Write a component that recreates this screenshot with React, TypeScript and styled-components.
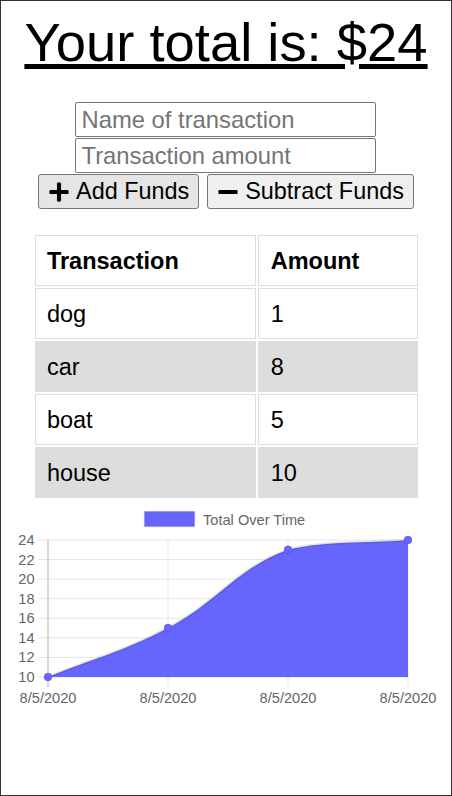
import styled, { createGlobalStyle } from "styled-components";
import { FaPlus, FaMinus } from "react-icons/fa";

const GlobalStyle = createGlobalStyle`
  html, body {
    margin: 0;
    padding: 0;
    background: #fff;
  }
  body {
    font-family: "Liberation Sans", Arial, sans-serif;
    color: #000;
  }
`;

const Page = styled.div`
  min-height: 100vh;
  box-sizing: border-box;
  border: 1px solid #333;
  display: flex;
  flex-direction: column;
  align-items: center;
`;

const Title = styled.h1`
  margin: 10px 0 0;
  font-size: 54.4px;
  font-weight: 400;
  line-height: normal;
  text-decoration: underline;
`;

const Form = styled.div`
  margin-top: 28px;
  display: flex;
  flex-direction: column;
  align-items: center;
  gap: 1px;
`;

const Input = styled.input`
  box-sizing: border-box;
  width: 301px;
  height: 35px;
  padding: 0 5px;
  font-family: inherit;
  font-size: 23.8px;
  border: 1px solid #767676;
  border-radius: 2px;
  outline: none;

  &::placeholder {
    color: #757575;
  }
`;

const ButtonRow = styled.div`
  display: flex;
  gap: 8px;
`;

const Button = styled.button<{ $shade?: boolean }>`
  box-sizing: border-box;
  height: 35px;
  display: inline-flex;
  align-items: center;
  gap: 6px;
  padding: 0 9px;
  font-family: inherit;
  font-size: 23.4px;
  color: #000;
  background: ${(p) => (p.$shade ? "#e5e5e5" : "#efefef")};
  border: 1px solid #767676;
  border-radius: 3px;
`;

const Table = styled.table`
  margin-top: 24px;
  width: 387px;
  table-layout: fixed;
  border-collapse: separate;
  border-spacing: 2px;
  font-size: 23.5px;
`;

const Th = styled.th<{ $w?: string }>`
  width: ${(p) => p.$w ?? "auto"};
  border: 1px solid #ddd;
  padding: 11.5px 11.4px;
  line-height: 26px;
  text-align: left;
  font-weight: 700;
`;

const Td = styled.td<{ $shade?: boolean }>`
  border: 1px solid #ddd;
  padding: 11.5px 11.4px;
  line-height: 26px;
  background: ${(p) => (p.$shade ? "#ddd" : "#fff")};
`;

const ChartBox = styled.svg`
  display: block;
  width: 450px;
  height: 215px;
  font-family: "Liberation Sans", Arial, sans-serif;
  font-size: 14.6px;
`;

const transactions = [
  { name: "dog", value: 1 },
  { name: "car", value: 8 },
  { name: "boat", value: 5 },
  { name: "house", value: 10 },
];

const totals = [10, 15, 23, 24];

// chart area, in svg pixels
const X0 = 47;
const X1 = 407;
const YT = 40;
const YB = 177;
const MIN = 10;
const MAX = 24;
const TENSION = 0.4;

const clamp = (v: number, lo: number, hi: number) => Math.min(hi, Math.max(lo, v));

const Chart = () => {
  const pts = totals.map((v, i) => ({
    x: X0 + (i * (X1 - X0)) / (totals.length - 1),
    y: YB - ((v - MIN) * (YB - YT)) / (MAX - MIN),
  }));

  // same spline as chart.js line tension
  const cps = pts.map((p, i) => {
    const prev = pts[i - 1] ?? p;
    const next = pts[i + 1] ?? p;
    const d01 = Math.hypot(p.x - prev.x, p.y - prev.y);
    const d12 = Math.hypot(next.x - p.x, next.y - p.y);
    const sum = d01 + d12 || 1;
    const fa = TENSION * (d01 / sum);
    const fb = TENSION * (d12 / sum);
    return {
      px: clamp(p.x - fa * (next.x - prev.x), X0, X1),
      py: clamp(p.y - fa * (next.y - prev.y), YT, YB),
      nx: clamp(p.x + fb * (next.x - prev.x), X0, X1),
      ny: clamp(p.y + fb * (next.y - prev.y), YT, YB),
    };
  });

  let line = `M${pts[0].x},${pts[0].y}`;
  for (let i = 1; i < pts.length; i++) {
    line += ` C${cps[i - 1].nx},${cps[i - 1].ny} ${cps[i].px},${cps[i].py} ${pts[i].x},${pts[i].y}`;
  }
  const area = `${line} L${X1},${YB} L${X0},${YB} Z`;

  const ticks: number[] = [];
  for (let v = MAX; v >= MIN; v -= 2) ticks.push(v);
  const yOf = (v: number) => YB - ((v - MIN) * (YB - YT)) / (MAX - MIN);

  return (
    <ChartBox viewBox="0 0 450 215">
      <rect x={143.5} y={11.5} width={50} height={15} fill="#6666ff" stroke="rgba(0,0,0,0.12)" strokeWidth={1.5} />
      <text x={202} y={24.5} fill="#666">Total Over Time</text>

      {ticks.map((v) => (
        <g key={v}>
          <line x1={37} x2={X1} y1={yOf(v)} y2={yOf(v)} stroke="rgba(0,0,0,0.1)" strokeWidth={1} />
          <text x={33.5} y={yOf(v) + 5} fill="#666" textAnchor="end">{v}</text>
        </g>
      ))}
      {pts.map((p, i) => (
        <g key={i}>
          <line x1={p.x} x2={p.x} y1={YT} y2={YB + 10} stroke="rgba(0,0,0,0.1)" strokeWidth={1} />
          <text x={p.x} y={203} fill="#666" textAnchor="middle">8/5/2020</text>
        </g>
      ))}
      <line x1={X0} x2={X0} y1={YT} y2={YB + 10} stroke="rgba(0,0,0,0.15)" strokeWidth={1.5} />

      <path d={area} fill="#6666ff" />
      <path d={line} fill="none" stroke="rgba(0,0,0,0.1)" strokeWidth={3} />
      {pts.map((p, i) => (
        <circle key={i} cx={p.x} cy={p.y} r={4} fill="#6666ff" stroke="rgba(0,0,0,0.1)" strokeWidth={1} />
      ))}
    </ChartBox>
  );
};

const App = () => {
  return (
    <>
      <GlobalStyle />
      <Page>
        <Title>Your total is: $24</Title>
        <Form>
          <Input type="text" placeholder="Name of transaction" />
          <Input type="number" placeholder="Transaction amount" />
          <ButtonRow>
            <Button $shade>
              <FaPlus size={22} />
              Add Funds
            </Button>
            <Button>
              <FaMinus size={22} />
              Subtract Funds
            </Button>
          </ButtonRow>
        </Form>
        <Table>
          <thead>
            <tr>
              <Th $w="197px">Transaction</Th>
              <Th>Amount</Th>
            </tr>
          </thead>
          <tbody>
            {transactions.map((t, i) => (
              <tr key={t.name}>
                <Td $shade={i % 2 === 1}>{t.name}</Td>
                <Td $shade={i % 2 === 1}>{t.value}</Td>
              </tr>
            ))}
          </tbody>
        </Table>
        <Chart />
      </Page>
    </>
  );
};

export default App;
